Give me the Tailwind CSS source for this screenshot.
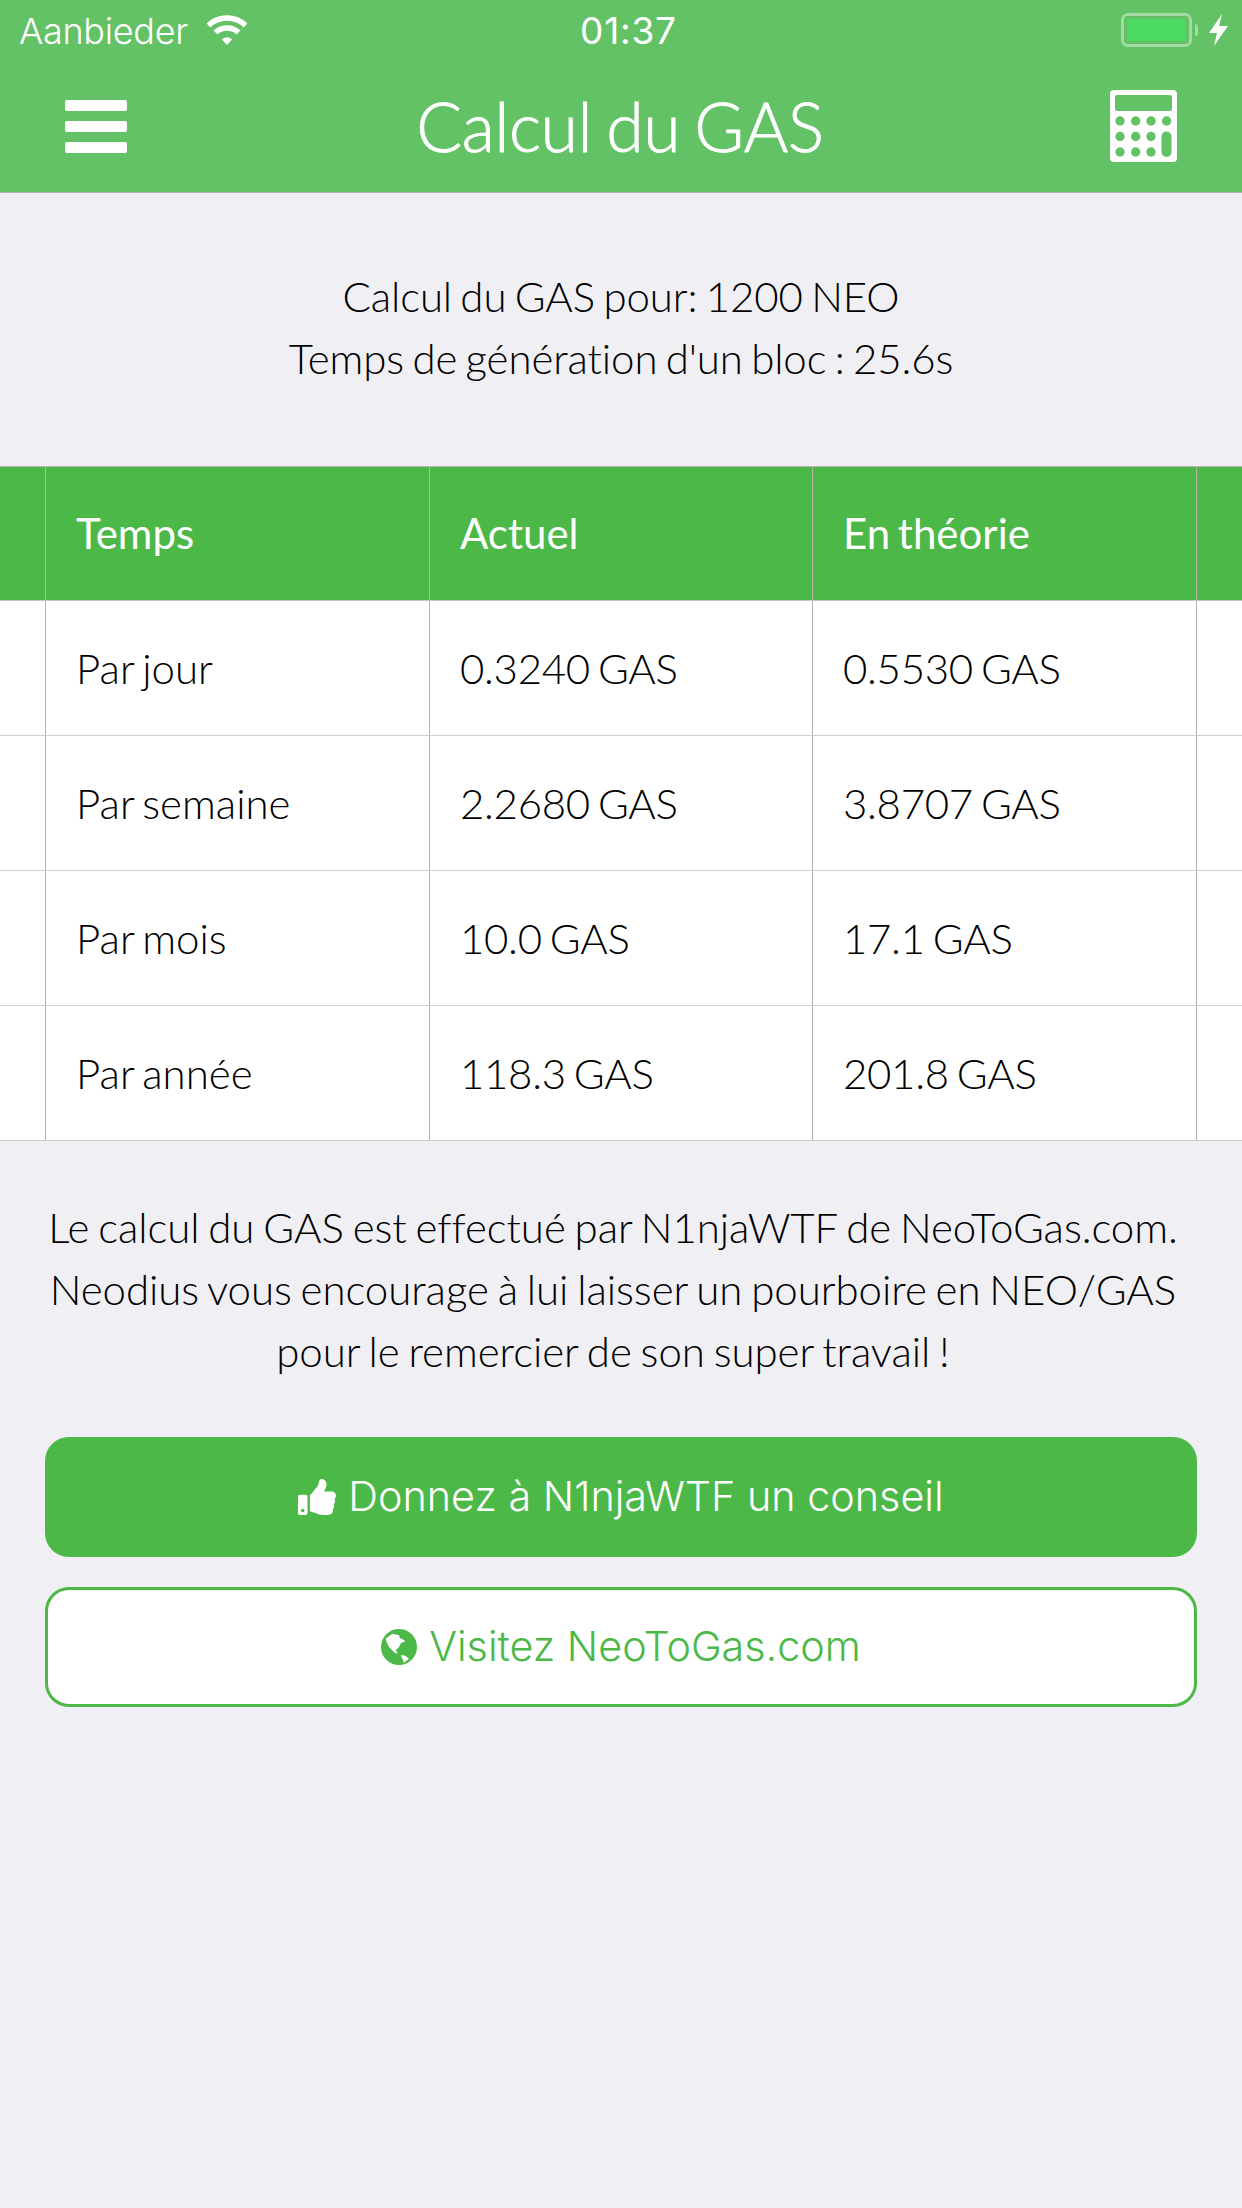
<!DOCTYPE html>
<html lang="fr">
<head>
    <meta charset="UTF-8">
    <meta name="viewport" content="width=device-width, initial-scale=1.0">
    <title>Calcul du GAS</title>
    <script src="https://cdn.jsdelivr.net/npm/@tailwindcss/browser@4"></script>
</head>
<body class="bg-[#efeff4] min-h-screen font-['Lato',sans-serif] font-light text-black [font-variant-ligatures:none]">
    <!-- Status bar + nav -->
    <header class="bg-[#64c266] h-[193px] border-b border-[#b2b2b2] text-white">
        <div class="h-[60px] flex items-center justify-between pl-[19px] pr-[14px] relative font-['Inter',sans-serif]">
            <div class="flex items-center gap-[18px]">
                <span class="text-[36px] font-light tracking-[-0.3px] pt-[1px]">Aanbieder</span>
                <svg width="42" height="30" viewBox="0 0 42 30" fill="none" stroke="white" stroke-width="5.5">
                    <path d="M2.5 10.5C12.5 .5 29.5 .5 39.5 10.5"/>
                    <path d="M9.5 17.5C15.5 11.5 26.5 11.5 32.5 17.5"/>
                    <path d="M16 24.5L21 30L26 24.5C23 21.5 19 21.5 16 24.5Z" fill="white" stroke="none"/>
                </svg>
            </div>
            <span class="absolute left-[580px] text-[37px] font-normal tracking-[0.8px] pt-[1px]">01:37</span>
            <div class="flex items-center gap-[11px]">
                <div class="flex items-center gap-[3px]">
                    <div class="w-[71px] h-[34px] rounded-[7px] border-[3px] border-white/40 p-[3px]">
                        <div class="w-full h-full rounded-[3px] bg-[#4cd964]"></div>
                    </div>
                    <div class="w-[3px] h-[12px] rounded-r-full bg-white/40"></div>
                </div>
                <svg width="19" height="32" viewBox="0 0 19 32" fill="white">
                    <path d="M13 0L0 19H8L5 32L19 12H10Z"/>
                </svg>
            </div>
        </div>
        <nav class="h-[132px] flex items-center pl-[65px] pr-[65px]">
            <div class="w-[62px] flex flex-col gap-[10px]">
                <div class="h-[11px] rounded-[2px] bg-white"></div>
                <div class="h-[11px] rounded-[2px] bg-white"></div>
                <div class="h-[11px] rounded-[2px] bg-white"></div>
            </div>
            <h1 class="flex-1 text-center text-[68px] font-light tracking-[-0.4px] [word-spacing:-4px] [-webkit-text-stroke:0.8px_white] pl-[3px]">Calcul du GAS</h1>
            <svg width="67" height="72" viewBox="0 0 67 72">
                <rect width="67" height="72" rx="4" fill="white"/>
                <g fill="#64c266">
                    <rect x="5" y="5" width="57" height="16" rx="2"/>
                    <circle cx="10" cy="31" r="4.7"/><circle cx="25.7" cy="31" r="4.7"/><circle cx="41" cy="31" r="4.7"/><circle cx="56.6" cy="31" r="4.7"/>
                    <circle cx="10" cy="46.5" r="4.7"/><circle cx="25.7" cy="46.5" r="4.7"/><circle cx="41" cy="46.5" r="4.7"/>
                    <circle cx="10" cy="62" r="4.7"/><circle cx="25.7" cy="62" r="4.7"/><circle cx="41" cy="62" r="4.7"/>
                    <rect x="51.5" y="41.5" width="10" height="25.5" rx="5"/>
                </g>
            </svg>
        </nav>
    </header>

    <!-- Info -->
    <div class="h-[273px] pt-[72px] text-center text-[42px] leading-[62px] [word-spacing:-3px] tracking-[-0.1px]">
        <p>Calcul du GAS pour: 1200 NEO</p>
        <p>Temps de génération d'un bloc : 25.6s</p>
    </div>

    <!-- Table -->
    <div class="border-t border-[#b2b2b2] text-[42px] [word-spacing:-3px]">
        <div class="grid grid-cols-[46px_384px_383px_384px_1fr] h-[134px] bg-[#4cb848] border-b border-[#c4c4c4] text-white font-normal">
            <div class="border-r border-[#b2b2b2]"></div>
            <div class="border-r border-[#b2b2b2] pl-[30px] flex items-center">Temps</div>
            <div class="border-r border-[#b2b2b2] pl-[30px] flex items-center">Actuel</div>
            <div class="border-r border-[#b2b2b2] pl-[30px] flex items-center">En théorie</div>
            <div></div>
        </div>
        <div class="grid grid-cols-[46px_384px_383px_384px_1fr] h-[135px] bg-white border-b border-[#d0d0d0]">
            <div class="border-r border-[#b2b2b2]"></div>
            <div class="border-r border-[#b2b2b2] pl-[30px] flex items-center">Par jour</div>
            <div class="border-r border-[#b2b2b2] pl-[30px] flex items-center tracking-[-0.3px]">0.3240 GAS</div>
            <div class="border-r border-[#b2b2b2] pl-[30px] flex items-center tracking-[-0.3px]">0.5530 GAS</div>
            <div></div>
        </div>
        <div class="grid grid-cols-[46px_384px_383px_384px_1fr] h-[135px] bg-white border-b border-[#d0d0d0]">
            <div class="border-r border-[#b2b2b2]"></div>
            <div class="border-r border-[#b2b2b2] pl-[30px] flex items-center">Par semaine</div>
            <div class="border-r border-[#b2b2b2] pl-[30px] flex items-center tracking-[-0.3px]">2.2680 GAS</div>
            <div class="border-r border-[#b2b2b2] pl-[30px] flex items-center tracking-[-0.3px]">3.8707 GAS</div>
            <div></div>
        </div>
        <div class="grid grid-cols-[46px_384px_383px_384px_1fr] h-[135px] bg-white border-b border-[#d0d0d0]">
            <div class="border-r border-[#b2b2b2]"></div>
            <div class="border-r border-[#b2b2b2] pl-[30px] flex items-center">Par mois</div>
            <div class="border-r border-[#b2b2b2] pl-[30px] flex items-center tracking-[-0.3px]">10.0 GAS</div>
            <div class="border-r border-[#b2b2b2] pl-[30px] flex items-center tracking-[-0.3px]">17.1 GAS</div>
            <div></div>
        </div>
        <div class="grid grid-cols-[46px_384px_383px_384px_1fr] h-[135px] bg-white border-b border-[#d0d0d0]">
            <div class="border-r border-[#b2b2b2]"></div>
            <div class="border-r border-[#b2b2b2] pl-[30px] flex items-center">Par année</div>
            <div class="border-r border-[#b2b2b2] pl-[30px] flex items-center tracking-[-0.3px]">118.3 GAS</div>
            <div class="border-r border-[#b2b2b2] pl-[30px] flex items-center tracking-[-0.3px]">201.8 GAS</div>
            <div></div>
        </div>
    </div>

    <!-- Credit -->
    <div class="pt-[55px] pr-[16px] text-center text-[42px] leading-[62px] [word-spacing:-2.5px] tracking-[-0.05px]">
        <p>Le calcul du GAS est effectué par N1njaWTF de NeoToGas.com.</p>
        <p>Neodius vous encourage à lui laisser un pourboire en NEO/GAS</p>
        <p>pour le remercier de son super travail !</p>
    </div>

    <!-- Buttons -->
    <div class="mt-[55px] mx-[45px] flex flex-col gap-[30px] font-['Inter',sans-serif] text-[41.3px] font-light">
        <a class="h-[120px] rounded-[24px] bg-[#4cb848] text-white flex items-center justify-center gap-[12px]">
            <svg width="38" height="36" viewBox="0 0 512 512" preserveAspectRatio="none" fill="white">
                <path d="M104 224H24c-13.255 0-24 10.745-24 24v240c0 13.255 10.745 24 24 24h80c13.255 0 24-10.745 24-24V248c0-13.255-10.745-24-24-24zM64 472c-13.255 0-24-10.745-24-24s10.745-24 24-24 24 10.745 24 24-10.745 24-24 24zM384 81.452c0 42.416-25.97 66.208-33.277 94.548h101.723c33.397 0 59.397 27.746 59.553 58.098.084 17.938-7.546 37.249-19.439 49.197l-.11.11c9.836 23.337 8.237 56.037-9.308 79.469 8.681 25.895-.069 57.704-16.382 74.757 4.298 17.598 2.244 32.575-6.148 44.632C440.202 511.587 389.616 512 346.839 512l-2.845-.001c-48.287-.017-87.806-17.598-119.56-31.725-15.957-7.099-36.821-15.887-52.651-16.178-6.54-.12-11.783-5.457-11.783-11.998v-213.77c0-3.2 1.282-6.271 3.558-8.521 39.614-39.144 56.648-80.587 89.117-113.111 14.804-14.832 20.188-37.236 25.393-58.902C282.515 39.293 291.817 0 312 0c24 0 72 8 72 81.452z"/>
            </svg>
            <span>Donnez à N1njaWTF un conseil</span>
        </a>
        <a class="h-[120px] rounded-[24px] bg-white border-[3px] border-[#4cb848] text-[#4cb848] flex items-center justify-center gap-[12px]">
            <svg width="36" height="36" viewBox="0 0 36 36">
                <circle cx="18" cy="18" r="18" fill="#4cb848"/>
                <path fill="white" d="M4.7 9.7L11.3 4.7L18 6.3L19 9L24 11.5L23 13L20 14L18 18L14.7 21.3L17 24.7L13.7 23.7L8 18L5.5 13Z"/>
                <path fill="white" d="M19.7 26.3L24 26.5L28 29.7L23 33.7L21.5 30Z"/>
            </svg>
            <span>Visitez NeoToGas.com</span>
        </a>
    </div>
</body>
</html>
